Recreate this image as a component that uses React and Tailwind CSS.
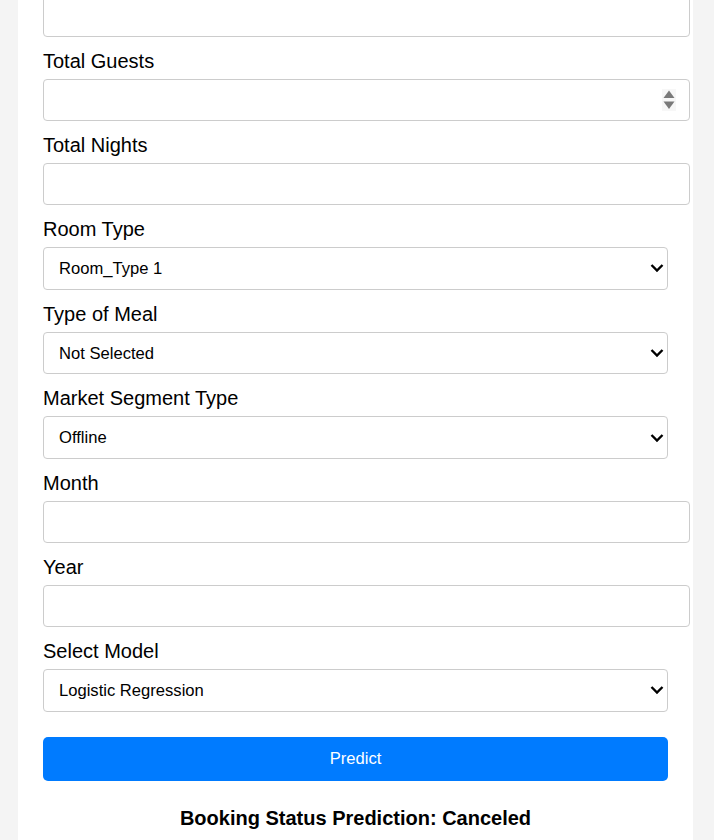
import React, { useState } from 'react';

// Booking form, scrolled partway down the page
const inputCls =
  'block w-[647px] h-[42px] px-[10px] border border-[#ccc] rounded-[4px] bg-white text-[16px] text-black outline-none';
const selectCls =
  'block w-full h-[42.67px] pl-[15px] pr-[24px] pt-[2px] border border-[#ccc] rounded-[4px] bg-white text-[16.6px] text-black outline-none appearance-none';

const Label = ({ children }) => (
  <label className="block mt-[13px] mb-[6px] text-[20px] leading-[23px] text-black">{children}</label>
);

const Select = ({ name, value, onChange, options }) => (
  <div className="relative">
    <select name={name} value={value} onChange={onChange} className={selectCls}>
      {options.map(opt => (
        <option key={opt}>{opt}</option>
      ))}
    </select>
    <svg
      className="absolute right-[4px] top-1/2 -translate-y-1/2 pointer-events-none"
      width="14"
      height="9"
      viewBox="0 0 14 9"
    >
      <path d="M1.5 1.5 L7 7 L12.5 1.5" fill="none" stroke="#000" strokeWidth="2.4" />
    </svg>
  </div>
);

const App = () => {
  const [form, setForm] = useState({
    guests: '',
    nights: '',
    roomType: 'Room_Type 1',
    meal: 'Not Selected',
    segment: 'Offline',
    month: '',
    year: '',
    model: 'Logistic Regression'
  });

  const handleChange = (e) => setForm({ ...form, [e.target.name]: e.target.value });

  return (
    <div className="min-h-[840px] bg-[#f4f4f4] overflow-hidden" style={{ fontFamily: '"Liberation Sans", Arial, sans-serif' }}>
      <div className="ml-[18px] w-[675px] min-h-[840px] bg-white px-[25px] pb-[20px]">
        {/* previous field, cut off by the scroll */}
        <input className={`${inputCls} -mt-[5px]`} />

        <Label>Total Guests</Label>
        <div className="relative w-[647px]">
          <input name="guests" value={form.guests} onChange={handleChange} className={inputCls} />
          <svg className="absolute right-[14px] top-[10px]" width="14" height="22" viewBox="0 0 14 22">
            <rect x="0" y="0" width="14" height="22" fill="#f7f7f7" />
            <path d="M7 1.5 L12.5 9 L1.5 9 Z" fill="#7a7a7a" />
            <path d="M1.5 12.5 L12.5 12.5 L7 20 Z" fill="#7a7a7a" />
          </svg>
        </div>

        <Label>Total Nights</Label>
        <input name="nights" value={form.nights} onChange={handleChange} className={inputCls} />

        <Label>Room Type</Label>
        <Select
          name="roomType"
          value={form.roomType}
          onChange={handleChange}
          options={['Room_Type 1', 'Room_Type 2', 'Room_Type 3', 'Room_Type 4', 'Room_Type 5', 'Room_Type 6', 'Room_Type 7']}
        />

        <Label>Type of Meal</Label>
        <Select
          name="meal"
          value={form.meal}
          onChange={handleChange}
          options={['Not Selected', 'Meal Plan 1', 'Meal Plan 2', 'Meal Plan 3']}
        />

        <Label>Market Segment Type</Label>
        <Select
          name="segment"
          value={form.segment}
          onChange={handleChange}
          options={['Offline', 'Online', 'Corporate', 'Aviation', 'Complementary']}
        />

        <Label>Month</Label>
        <input name="month" value={form.month} onChange={handleChange} className={inputCls} />

        <Label>Year</Label>
        <input name="year" value={form.year} onChange={handleChange} className={inputCls} />

        <Label>Select Model</Label>
        <Select
          name="model"
          value={form.model}
          onChange={handleChange}
          options={['Logistic Regression', 'Decision Tree', 'Random Forest']}
        />

        <button className="block w-full h-[44px] mt-[25px] pt-[2px] bg-[#007bff] rounded-[5px] text-white text-[16.6px]">
          Predict
        </button>

        <h3 className="mt-[26px] text-center text-[20px] leading-[23px] font-bold text-black">
          Booking Status Prediction: Canceled
        </h3>
      </div>
    </div>
  );
};

export default App;
